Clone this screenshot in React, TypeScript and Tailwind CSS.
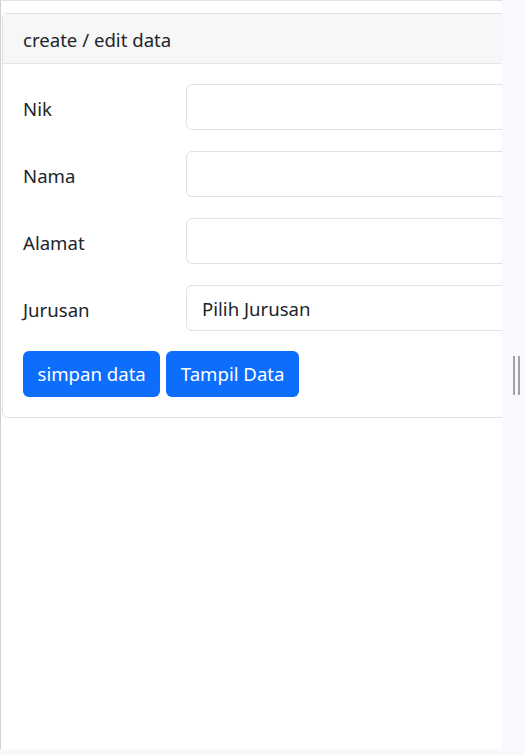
import React from "react";

const fields = ["Nik", "Nama", "Alamat"];

const App = () => {
  return (
    <div className="relative h-[755px] w-[525px] overflow-hidden bg-[#f8f9fc] font-['Noto_Sans',sans-serif] text-[18.6px] leading-[1.5] text-[#212529]">
      <div className="h-[749px] w-[502px] overflow-hidden border-l border-t border-l-[#d0d0d4] border-t-[#e2e2e2] bg-white pl-px pt-3">
        <div className="w-[560px] rounded-[6px] border border-[#dfdfdf]">
          <div className="h-[50px] border-b border-[#e6e6e6] bg-[#f7f7f7] px-5 pt-[12px] text-[#212529]">
            create / edit data
          </div>
          <div className="px-5 pb-5 pt-5">
            {fields.map((label) => (
              <div key={label} className="mb-[21px] flex items-center">
                <label className="w-[163px] pt-1">{label}</label>
                <input
                  type="text"
                  className="h-[46px] flex-1 rounded-[6px] border border-[#dee2e6] bg-white px-4 outline-none"
                />
              </div>
            ))}
            <div className="mb-5 flex items-center">
              <label className="w-[163px] pt-1">Jurusan</label>
              <div className="flex h-[46px] flex-1 items-center rounded-[6px] border border-[#dee2e6] bg-white px-[15px] pt-px">
                Pilih Jurusan
              </div>
            </div>
            <div className="flex gap-[6px]">
              <button className="h-[46px] rounded-[6px] bg-[#0d6efd] px-[14.5px] text-white">simpan data</button>
              <button className="h-[46px] rounded-[6px] bg-[#0d6efd] px-[14.5px] text-white">Tampil Data</button>
            </div>
          </div>
        </div>
      </div>
      {/* scrollbar grip */}
      <div className="absolute left-[513px] top-[356px] flex gap-[3px]">
        <div className="h-[39px] w-[2px] bg-[#a3a3a3]" />
        <div className="h-[39px] w-[2px] bg-[#a3a3a3]" />
      </div>
    </div>
  );
};

export default App;
